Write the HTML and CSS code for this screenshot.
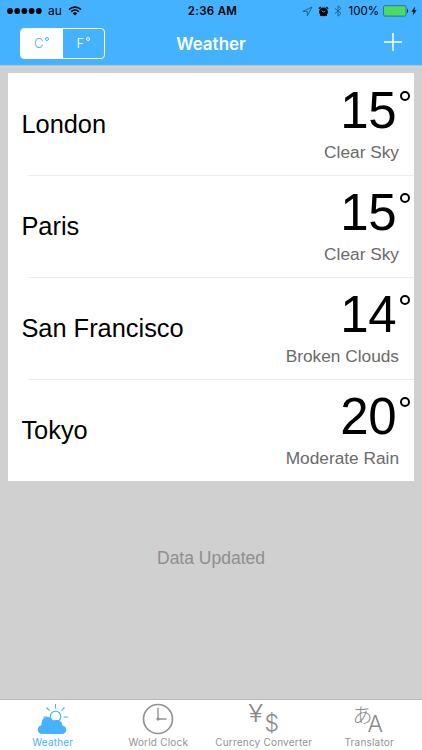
FILE: index.html
```html
<!DOCTYPE html>
<html lang="en">
<head>
    <meta charset="UTF-8">
    <meta name="viewport" content="width=device-width, initial-scale=1.0">
    <title>Weather</title>
    <link rel="stylesheet" href="styles.css">
</head>
<body>
    <header class="header">
        <div class="status-bar">
            <div class="status-left">
                <svg class="signal" width="35" height="8" viewBox="0 0 35 8">
                    <circle cx="3" cy="4" r="2.9"/>
                    <circle cx="10.2" cy="4" r="2.9"/>
                    <circle cx="17.4" cy="4" r="2.9"/>
                    <circle cx="24.6" cy="4" r="2.9"/>
                    <circle cx="31.8" cy="4" r="2.9"/>
                </svg>
                <span class="carrier">au</span>
                <svg class="wifi" width="14" height="10" viewBox="0 0 14 10">
                    <path d="M1 3.5C4.4.3 9.6.3 13 3.5M3.2 5.7c2.2-2 5.4-2 7.6 0" fill="none" stroke="#000" stroke-width="1.7"/>
                    <path d="M4.7 7.2c1.4-1.2 3.2-1.2 4.6 0L7 9.6z"/>
                </svg>
            </div>
            <span class="time">2:36 AM</span>
            <div class="status-right">
                <svg width="11" height="11" viewBox="0 0 11 11" fill="none" stroke="#1c5c8c" stroke-width="0.9">
                    <path d="M10 1L.9 5.4h4.4v4.5z"/>
                </svg>
                <svg class="alarm" width="11" height="11" viewBox="0 0 11 11">
                    <circle cx="5.5" cy="5.8" r="4.4"/>
                    <path d="M.9 2.7L2.9 1M10.1 2.7L8.1 1M2.900 9l-.5.8M8.100 9l.5.8" stroke="#000" stroke-width="1.5"/>
                    <path d="M3.5 4.5l2 1.6 1.7-1.2" fill="none" stroke="#44b2ff" stroke-width="1"/>
                </svg>
                <svg class="bluetooth" width="8" height="12" viewBox="0 0 8 12" fill="none" stroke="#1c5c8c" stroke-width="0.9">
                    <path d="M.8 3.3l6.2 5.2L4 11.2V.8l3 2.7L.8 8.7"/>
                </svg>
                <span class="percent">100%</span>
                <svg class="battery" width="26" height="12" viewBox="0 0 26 12">
                    <rect x=".5" y=".7" width="22.5" height="10.4" rx="1.5" fill="#4cd964" stroke="#23668f" stroke-width=".8"/>
                    <path d="M24 4c1.5.5 1.5 3.5 0 4z"/>
                </svg>
                <svg class="bolt" width="6" height="10" viewBox="0 0 6 10">
                    <path d="M4.2.6L.4 5.7h2.2L1.7 9.4 5.6 4.2H3.3z"/>
                </svg>
            </div>
        </div>
        <div class="nav-bar">
            <div class="unit-switch">
                <span class="unit active">C<i class="unit-degree"></i></span>
                <span class="unit">F<i class="unit-degree"></i></span>
            </div>
            <h1 class="title">Weather</h1>
            <svg class="add" width="18" height="18" viewBox="0 0 18 18">
                <path d="M9 0v18M0 9h18" stroke="#fff" stroke-width="1.5"/>
            </svg>
        </div>
    </header>

    <main class="content">
        <ul class="city-list">
            <li class="city">
                <span class="city-name">London</span>
                <div class="city-weather">
                    <span class="temp">15<i class="degree"></i></span>
                    <span class="condition">Clear Sky</span>
                </div>
            </li>
            <li class="city">
                <span class="city-name">Paris</span>
                <div class="city-weather">
                    <span class="temp">15<i class="degree"></i></span>
                    <span class="condition">Clear Sky</span>
                </div>
            </li>
            <li class="city">
                <span class="city-name">San Francisco</span>
                <div class="city-weather">
                    <span class="temp">14<i class="degree"></i></span>
                    <span class="condition">Broken Clouds</span>
                </div>
            </li>
            <li class="city">
                <span class="city-name">Tokyo</span>
                <div class="city-weather">
                    <span class="temp">20<i class="degree"></i></span>
                    <span class="condition">Moderate Rain</span>
                </div>
            </li>
        </ul>
        <p class="updated">Data Updated</p>
    </main>

    <nav class="tab-bar">
        <div class="tab active">
            <svg width="36" height="34" viewBox="0 0 36 34">
                <g fill="none" stroke="#44b2ff" stroke-width="1.1">
                    <circle cx="20.5" cy="15.5" r="5.3"/>
                    <path d="M20.5 3v4.500M11.500 6.500l3 3.200M29.500 6.500l-3 3.200M8.300 16h4M28.500 16H33"/>
                </g>
                <path d="M7.500 33C1.500 33 1.300 25 6.500 24.200 6.200 19.500 8.500 16 12.500 16c2.500 0 4.500 1.200 5.300 3.600C22.500 17.800 27.300 20 27.500 24.800 32.800 25.500 32.500 33 27 33z" fill="#44b2ff"/>
            </svg>
            <span class="tab-label">Weather</span>
        </div>
        <div class="tab">
            <svg width="36" height="34" viewBox="0 0 36 34" fill="none" stroke="#929292">
                <circle cx="18" cy="18" r="14.5" stroke-width="1.7"/>
                <path d="M18 7v11h8.500" stroke-width="1.4"/>
                <circle cx="18" cy="18" r="1.2" fill="#929292"/>
            </svg>
            <span class="tab-label">World Clock</span>
        </div>
        <div class="tab">
            <svg width="36" height="34" viewBox="0 0 36 34">
                <text class="glyph yen" transform="translate(2.2 21) scale(1.15 1)">¥</text>
                <text class="glyph dollar" x="18.5" y="30">$</text>
            </svg>
            <span class="tab-label">Currency Converter</span>
        </div>
        <div class="tab">
            <svg width="36" height="34" viewBox="0 0 36 34">
                <text class="glyph kana" x="1.5" y="21.5">あ</text>
                <text class="glyph latin" x="16.5" y="31">A</text>
            </svg>
            <span class="tab-label">Translator</span>
        </div>
    </nav>
</body>
</html>
```
FILE: styles.css
```css
* {
    box-sizing: border-box;
}

body {
    margin: 0;
    height: 750px;
    display: flex;
    flex-direction: column;
    overflow: hidden;
    background: #d0d0d0;
    font-family: Inter, "Liberation Sans", sans-serif;
    color: #000;
}

.header {
    height: 66px;
    background: #44b2ff;
    border-bottom: 1px solid #a9c9df;
}

.status-bar {
    display: grid;
    grid-template-columns: 1fr auto 1fr;
    align-items: center;
    height: 22px;
    padding: 0 5px 0 7px;
    font-size: 11.5px;
    line-height: 22px;
}

.status-left,
.status-right {
    display: flex;
    align-items: center;
}

.status-right {
    justify-content: flex-end;
}

.carrier {
    margin: 0 6px;
    font-size: 12px;
}

.time {
    padding-left: 1px;
    font-weight: 600;
    letter-spacing: 0.3px;
}

.alarm {
    margin-left: 5px;
}

.bluetooth {
    margin: 0 7px 0 5px;
}

.battery {
    margin: 0 2px 0 4px;
}

.nav-bar {
    display: grid;
    grid-template-columns: 1fr auto 1fr;
    align-items: center;
    height: 43px;
    padding: 0 20px;
}

.unit-switch {
    display: flex;
    width: 85px;
    height: 31px;
    border: 1px solid #fff;
    border-radius: 4px;
    overflow: hidden;
}

.unit {
    flex: 1;
    display: flex;
    justify-content: center;
    font-size: 13px;
    font-weight: 300;
    line-height: 29px;
    color: #fff;
}

.unit.active {
    background: #fff;
    color: #44b2ff;
}

.unit-degree {
    width: 4px;
    height: 4px;
    margin: 8px 0 0 2px;
    border: 1px solid;
    border-radius: 50%;
}

.title {
    margin: 0;
    font-size: 17px;
    font-weight: 600;
    line-height: 20px;
    color: #fff;
}

.add {
    justify-self: end;
    margin-top: -3px;
}

.content {
    flex: 1;
    padding: 7.4px 8.4px 0;
    font-family: "Liberation Sans", Arial, sans-serif;
}

.city-list {
    margin: 0;
    padding: 0;
    list-style: none;
    background: #fff;
}

.city {
    display: flex;
    justify-content: space-between;
    height: 101.9px;
    padding-left: 13px;
    background: linear-gradient(#ececec, #ececec) right top / calc(100% - 20px) 1px no-repeat;
}

.city:first-child {
    background: none;
}

.city-name {
    padding-top: 36px;
    font-size: 25.4px;
    line-height: 30px;
}

.city-weather {
    display: flex;
    flex-direction: column;
    align-items: flex-end;
    padding-right: 14.6px;
}

.temp {
    display: flex;
    margin: 8px -11.2px 0 0;
    font-size: 51px;
    line-height: 60px;
    letter-spacing: -0.4px;
}

.degree {
    width: 10px;
    height: 10px;
    margin: 10px 0 0 4px;
    border: 2px solid #000;
    border-radius: 50%;
}

.condition {
    font-size: 17.3px;
    line-height: 20px;
    color: #6a6a6a;
    margin-top: 1px;
}

.updated {
    margin: 67px 0 0;
    text-align: center;
    font-size: 17.5px;
    line-height: 20px;
    color: #8e8e8e;
}

.tab-bar {
    display: grid;
    grid-template-columns: repeat(4, 1fr);
    height: 51px;
    padding-top: 1px;
    background: #fff;
    border-top: 1px solid #b8b8b8;
}

.tab {
    display: flex;
    flex-direction: column;
    align-items: center;
    color: #929292;
}

.tab svg {
    overflow: visible;
}

.tab.active {
    color: #44b2ff;
}

.tab-label {
    font-size: 10px;
    line-height: 14px;
    letter-spacing: 0.2px;
    white-space: nowrap;
}

.glyph {
    fill: #8a8a8a;
    font-family: Inter, sans-serif;
    font-weight: 300;
}

.yen {
    font-size: 24px;
}

.dollar {
    font-size: 23px;
}

.kana {
    font-family: "Noto Sans CJK JP", sans-serif;
    font-size: 20px;
}

.latin {
    font-size: 23px;
}
```
